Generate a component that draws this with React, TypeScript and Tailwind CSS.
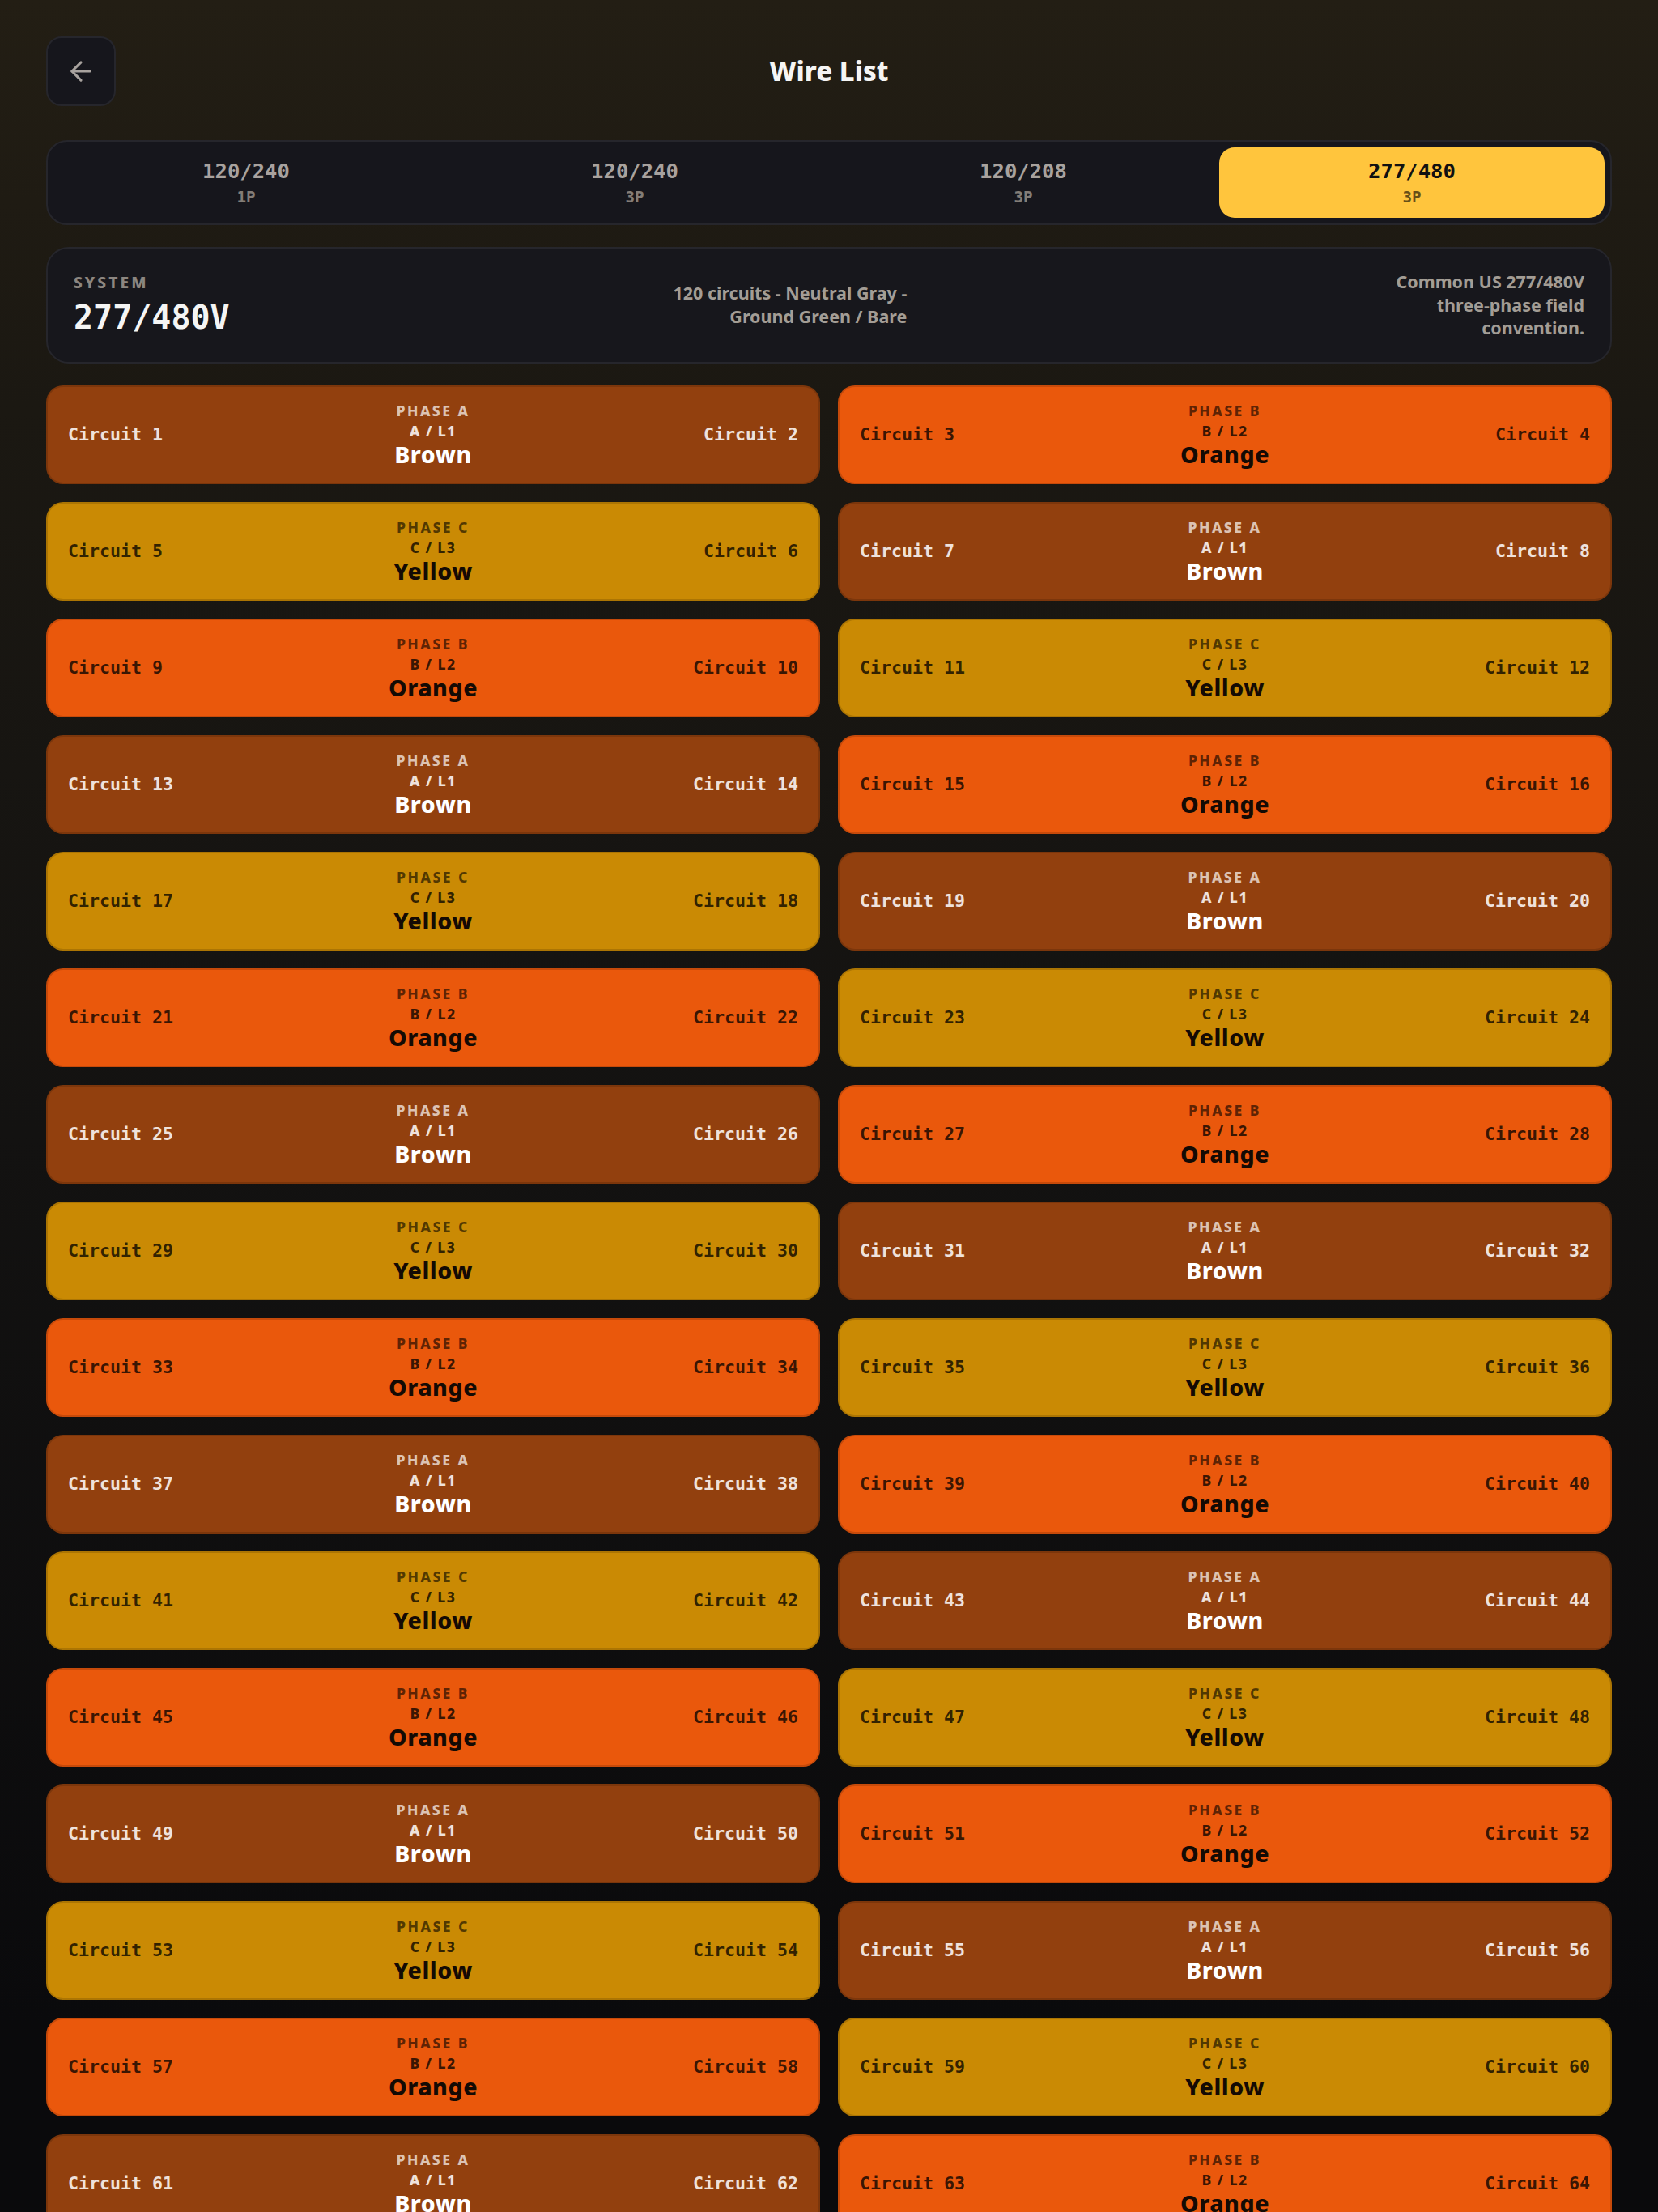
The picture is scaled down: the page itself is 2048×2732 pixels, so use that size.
import { ArrowLeft } from 'lucide-react';

type Phase = {
  name: string;
  line: string;
  color: string;
  bg: string;
  circuit: string;
  label: string;
  sub: string;
  title: string;
};

const PHASES: Phase[] = [
  {
    name: 'PHASE A',
    line: 'A / L1',
    color: 'Brown',
    bg: 'bg-[#92400e]',
    circuit: 'text-white/85',
    label: 'text-white/70',
    sub: 'text-white/85',
    title: 'text-white',
  },
  {
    name: 'PHASE B',
    line: 'B / L2',
    color: 'Orange',
    bg: 'bg-[#ea580c]',
    circuit: 'text-black/75',
    label: 'text-black/60',
    sub: 'text-black/75',
    title: 'text-[#140a04]',
  },
  {
    name: 'PHASE C',
    line: 'C / L3',
    color: 'Yellow',
    bg: 'bg-[#ca8a04]',
    circuit: 'text-black/75',
    label: 'text-black/60',
    sub: 'text-black/75',
    title: 'text-[#140a04]',
  },
];

const TABS = [
  { volts: '120/240', phase: '1P' },
  { volts: '120/240', phase: '3P' },
  { volts: '120/208', phase: '3P' },
  { volts: '277/480', phase: '3P' },
];

const ACTIVE_TAB = 3;
const TOTAL_CIRCUITS = 120;

const sans = { fontFamily: '"Noto Sans", "Open Sans", sans-serif' };
const mono = { fontFamily: '"DejaVu Sans Mono", "Liberation Mono", monospace' };

function CircuitPair({ index }: { index: number }) {
  const p = PHASES[index % 3];
  const first = index * 2 + 1;
  return (
    <div
      className={`grid grid-cols-[1fr_auto_1fr] items-center rounded-[21px] border-2 border-black/15 px-[25px] py-[18px] ${p.bg}`}
    >
      <span style={mono} className={`text-[21.6px] font-bold leading-[30px] ${p.circuit}`}>
        Circuit {first}
      </span>
      <div className="flex flex-col items-center text-center">
        <span className={`text-[17.6px] font-extrabold leading-[22px] tracking-[0.14em] ${p.label}`}>
          {p.name}
        </span>
        <span className={`mt-[2px] text-[17.6px] font-extrabold leading-[24px] tracking-[0.08em] ${p.sub}`}>
          {p.line}
        </span>
        <span className={`text-[28.5px] font-extrabold leading-[34px] tracking-[0.02em] ${p.title}`}>
          {p.color}
        </span>
      </div>
      <span style={mono} className={`text-right text-[21.6px] font-bold leading-[30px] ${p.circuit}`}>
        Circuit {first + 1}
      </span>
    </div>
  );
}

export default function App() {
  const pairs = Array.from({ length: TOTAL_CIRCUITS / 2 }, (_, i) => i);

  return (
    <div
      style={sans}
      className="min-h-screen bg-[linear-gradient(180deg,#231e14_0px,#1b1812_500px,#131211_1400px,#0a0a0c_2500px)] px-[57px] pb-[60px] pt-[45px]"
    >
      {/* header */}
      <header className="grid grid-cols-[86px_1fr_86px] items-center">
        <button
          type="button"
          aria-label="Back"
          className="flex h-[86px] w-[86px] items-center justify-center rounded-[19px] border-2 border-[#26262c] bg-[#16161c]"
        >
          <ArrowLeft size={38} strokeWidth={2} className="text-[#a8a29e]" />
        </button>
        <h1 className="text-center text-[33px] font-extrabold text-[#f5f5f4]">Wire List</h1>
        <div />
      </header>

      {/* system tabs */}
      <nav className="mt-[42px] grid grid-cols-4 gap-[4px] rounded-[26px] border-2 border-[#26262c] bg-[#16161c] p-[7px]">
        {TABS.map((t, i) => {
          const active = i === ACTIVE_TAB;
          return (
            <div
              key={i}
              style={mono}
              className={`flex h-[87px] flex-col items-center justify-center rounded-[19px] ${
                active ? 'bg-[#ffc53d]' : ''
              }`}
            >
              <span
                className={`text-[25.6px] font-bold leading-[32px] ${
                  active ? 'text-[#111111]' : 'text-[#a8a29e]'
                }`}
              >
                {t.volts}
              </span>
              <span
                className={`mt-[5px] text-[19.2px] font-bold leading-[24px] ${
                  active ? 'text-black/60' : 'text-[#837d77]'
                }`}
              >
                {t.phase}
              </span>
            </div>
          );
        })}
      </nav>

      {/* system summary */}
      <section className="mt-[27px] flex items-center justify-between rounded-[28px] border-2 border-[#26262c] bg-[#17171c] px-[32px] py-[27px]">
        <div className="flex flex-col">
          <span className="text-[19.2px] font-extrabold leading-[20px] tracking-[0.16em] text-[#8c8680]">
            SYSTEM
          </span>
          <span style={mono} className="mt-[10px] text-[40px] font-bold leading-[46px] text-[#f5f5f4]">
            277/480V
          </span>
        </div>
        <p className="max-w-[300px] text-right text-[21.5px] font-bold leading-[28.5px] text-[#a39d95]">
          120 circuits - Neutral Gray - Ground Green / Bare
        </p>
        <p className="max-w-[300px] text-right text-[21.5px] font-bold leading-[28.5px] text-[#a39d95]">
          Common US 277/480V three-phase field convention.
        </p>
      </section>

      {/* circuit pairs */}
      <div className="mt-[27px] grid grid-cols-2 gap-[22px]">
        {pairs.map((i) => (
          <CircuitPair key={i} index={i} />
        ))}
      </div>
    </div>
  );
}
